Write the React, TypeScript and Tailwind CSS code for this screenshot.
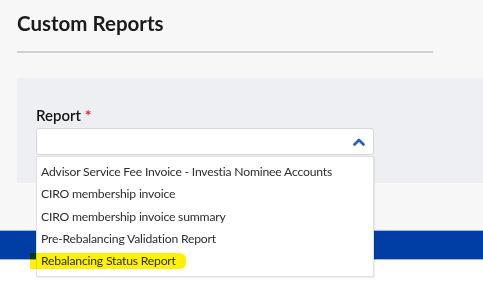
const reports = [
  'Advisor Service Fee Invoice - Investia Nominee Accounts',
  'CIRO membership invoice',
  'CIRO membership invoice summary',
  'Pre-Rebalancing Validation Report',
  'Rebalancing Status Report',
];

function ChevronUp() {
  return (
    <svg width="12" height="8" viewBox="0 0 12 8" fill="none">
      <path d="M1.5 6.5 L6 2 L10.5 6.5" stroke="#1f5fd6" strokeWidth="2.6" strokeLinecap="round" strokeLinejoin="round" />
    </svg>
  );
}

export default function App() {
  return (
    <div
      className="relative w-[483px] h-[290px] overflow-hidden bg-white"
      style={{ fontFamily: 'Lato, "Open Sans", sans-serif' }}
    >
      <div className="bg-[#f7f7f7]">
        <div className="px-[17px] pt-[9px]">
          <h1 className="text-[20.5px] leading-[28px] font-bold text-[#1b1b1b]">Custom Reports</h1>
          <div className="mt-[14px] h-[2px] w-[416px] bg-[#cfcfcf]" />
        </div>

        <div className="mt-[25px] ml-[17px] h-[105px] bg-[#eeeff3] pt-[27px] pl-[19px]">
          <label className="block text-[15px] leading-[20px] font-semibold text-[#141414]">
            Report <span className="text-[16px] font-bold text-[#e8262b]">*</span>
          </label>
          <div className="relative mt-[3px] w-[338px]">
            <div className="flex h-[27px] items-center justify-end rounded-[3px] border border-[#d6d6d6] bg-white pr-[8px]">
              <ChevronUp />
            </div>
            <ul className="absolute left-0 top-[28px] z-10 w-[338px] border border-[#e2e2e2] bg-white pt-[4px] pb-[4px] shadow-[1px_1px_1px_rgba(0,0,0,0.06)]">
              {reports.map((r) => (
                <li key={r} className="relative whitespace-nowrap pl-[4px] text-[12.2px] tracking-[-0.2px] leading-[22.25px] text-[#2e2e2e]">
                  {r}
                </li>
              ))}
            </ul>
          </div>
        </div>

        <div className="h-[47px]" />
      </div>

      <div className="h-[30px] border-y border-[#9fb2dd] bg-[#003da5]" />

      {/* highlighter mark */}
      <div className="pointer-events-none absolute left-[30px] top-[253px] z-20 h-[16px] w-[156px] rounded-r-[6px] bg-[#fff200] mix-blend-multiply" />
    </div>
  );
}
